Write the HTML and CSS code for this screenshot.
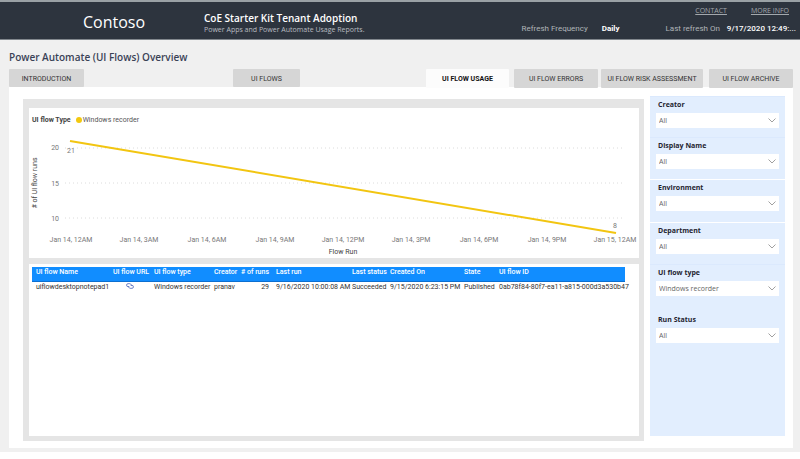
FILE: index.html
```html
<!DOCTYPE html>
<html lang="en">
<head>
<meta charset="utf-8">
<title>CoE Starter Kit Tenant Adoption</title>
<link rel="stylesheet" href="styles.css">
</head>
<body>
<div class="report">
  <header class="topbar">
    <div class="brand">Contoso</div>
    <div class="heading">
      <h1>CoE Starter Kit Tenant Adoption</h1>
      <p>Power Apps and Power Automate Usage Reports.</p>
    </div>
    <div class="meta">
      <nav class="links"><a href="#contact">CONTACT</a><a href="#info">MORE INFO</a></nav>
      <dl class="refresh">
        <dt>Refresh Frequency</dt><dd class="freq">Daily</dd>
        <dt>Last refresh On</dt><dd>9/17/2020 12:49:...</dd>
      </dl>
    </div>
  </header>

  <main>
    <h2>Power Automate (UI Flows) Overview</h2>
    <nav class="tabs">
      <button type="button" class="tab intro">INTRODUCTION</button>
      <button type="button" class="tab flows">UI FLOWS</button>
      <button type="button" class="tab usage" aria-current="page">UI FLOW USAGE</button>
      <button type="button" class="tab errors">UI FLOW ERRORS</button>
      <button type="button" class="tab risk">UI FLOW RISK ASSESSMENT</button>
      <button type="button" class="tab archive">UI FLOW ARCHIVE</button>
    </nav>

    <div class="page">
      <div class="visuals">
        <section class="card">
          <div class="legend"><b>UI flow Type</b><span class="dot"></span>Windows recorder</div>
          <svg class="chart" viewBox="0 0 610 132" role="img" aria-label="Number of UI flow runs by flow run">
            <g class="grid">
              <path d="M36 23H593M36 58H593M36 93H593"/>
            </g>
            <g class="axis">
              <text x="30" y="25" text-anchor="end">20</text>
              <text x="30" y="61" text-anchor="end">15</text>
              <text x="30" y="96" text-anchor="end">10</text>
            </g>
            <g class="axis" text-anchor="middle">
              <text x="42" y="117">Jan 14, 12AM</text>
              <text x="110" y="117">Jan 14, 3AM</text>
              <text x="178" y="117">Jan 14, 6AM</text>
              <text x="246" y="117">Jan 14, 9AM</text>
              <text x="314" y="117">Jan 14, 12PM</text>
              <text x="382" y="117">Jan 14, 3PM</text>
              <text x="450" y="117">Jan 14, 6PM</text>
              <text x="518" y="117">Jan 14, 9PM</text>
              <text x="586" y="117">Jan 15, 12AM</text>
              <text x="42" y="28">21</text>
              <text x="586" y="103">8</text>
            </g>
            <g class="title" text-anchor="middle">
              <text x="314" y="129">Flow Run</text>
              <text transform="translate(8 58) rotate(-90)"># of UI flow runs</text>
            </g>
            <path class="series" d="M41 16L587 108"/>
          </svg>
        </section>

        <section class="card runs">
          <table>
            <colgroup>
              <col class="c-name"><col class="c-url"><col class="c-type"><col class="c-creator"><col class="c-runs"><col class="c-last"><col class="c-status"><col class="c-created"><col class="c-state"><col class="c-id">
            </colgroup>
            <thead>
              <tr><th>UI flow Name</th><th>UI flow URL</th><th>UI flow type</th><th>Creator</th><th class="num"># of runs</th><th>Last run</th><th>Last status</th><th>Created On</th><th>State</th><th>UI flow ID</th></tr>
            </thead>
            <tbody>
              <tr>
                <td>uiflowdesktopnotepad1</td>
                <td class="url"><a href="#flow" aria-label="Open flow"><svg viewBox="0 0 8 6"><path d="M3 3.6H2a1.4 1.4 0 0 1 0-2.9h1.8a1.4 1.4 0 0 1 1.2 2.1M5 2.4h1a1.4 1.4 0 0 1 0 2.9H4.2A1.4 1.4 0 0 1 3 3.2"/></svg></a></td>
                <td>Windows recorder</td><td>pranav</td><td class="num">29</td><td>9/16/2020 10:00:08 AM</td><td>Succeeded</td><td>9/15/2020 6:23:15 PM</td><td>Published</td><td>0ab78f84-80f7-ea11-a815-000d3a530b47</td>
              </tr>
            </tbody>
          </table>
        </section>
      </div>

      <aside class="filters">
        <div class="filter"><label for="creator">Creator</label><div class="pick"><select id="creator"><option>All</option></select><svg viewBox="0 0 8 5"><path d="M.5 .5L4 4L7.5 .5"/></svg></div></div>
        <div class="filter"><label for="display">Display Name</label><div class="pick"><select id="display"><option>All</option></select><svg viewBox="0 0 8 5"><path d="M.5 .5L4 4L7.5 .5"/></svg></div></div>
        <div class="filter ruled env"><label for="environment">Environment</label><div class="pick"><select id="environment"><option>All</option></select><svg viewBox="0 0 8 5"><path d="M.5 .5L4 4L7.5 .5"/></svg></div></div>
        <div class="filter ruled"><label for="department">Department</label><div class="pick"><select id="department"><option>All</option></select><svg viewBox="0 0 8 5"><path d="M.5 .5L4 4L7.5 .5"/></svg></div></div>
        <div class="filter tall"><label for="type">UI flow type</label><div class="pick"><select id="type"><option>Windows recorder</option></select><svg viewBox="0 0 8 5"><path d="M.5 .5L4 4L7.5 .5"/></svg></div></div>
        <div class="filter last"><label for="status">Run Status</label><div class="pick"><select id="status"><option>All</option></select><svg viewBox="0 0 8 5"><path d="M.5 .5L4 4L7.5 .5"/></svg></div></div>
      </aside>
    </div>
  </main>
</div>
</body>
</html>
```
FILE: styles.css
```css
* { box-sizing: border-box; }
body {
  margin: 0;
  background: #fff;
  color: #333;
  font: 7px/10px "Open Sans", "Noto Sans", sans-serif;
}
h1, h2, p, dl, dd { margin: 0; }
button, select { font: inherit; color: inherit; border: 0; border-radius: 0; padding: 0; }

.report {
  background: #f0f0f0;
  padding-bottom: 4px;
  box-shadow: 0 2px 6px #e4e4e4;
}

.topbar {
  display: flex;
  height: 40px;
  border-top: 2px solid #9aa1a5;
  border-bottom: 1px solid #81878d;
  background: #2d343e;
  color: #fff;
}
.brand {
  width: 204px;
  padding: 8px 0 0 83px;
  font-size: 16px;
  line-height: 24px;
}
.heading { padding-top: 9px; }
.heading h1 { font-size: 10px; line-height: 14px; font-weight: 600; white-space: nowrap; }
.heading p { font-size: 7px; line-height: 10px; color: #b9bcc0; white-space: nowrap; }
.meta { margin-left: auto; padding: 3px 4px 0 0; font-size: 8px; line-height: 12px; }
.links { display: flex; justify-content: flex-end; gap: 24px; padding-right: 7px; font-size: 7px; }
.links a { color: #a3a8ad; }
.refresh { display: flex; margin-top: 6px; white-space: nowrap; font-family: Roboto, "Open Sans", sans-serif; }
.refresh dt { color: #b0b4b8; }
.refresh dd { margin-left: 7px; font-weight: 500; }
.refresh .freq { margin: 0 46px 0 14px; font-weight: 700; }

main { padding: 0 7px 0 9px; }
h2 { padding-top: 10px; font-size: 10px; line-height: 14px; color: #3a4256; font-weight: 600; }

.tabs {
  display: grid;
  grid-template-columns: 75fr 149fr 67fr 126fr 83fr 5fr 84fr 3fr 102fr 6fr 84fr;
  margin-top: 5px;
  height: 18px;
}
.tab { background: #d6d6d6; white-space: nowrap; height: 19px; border-radius: 1px; z-index: 1; font-family: Roboto, "Open Sans", sans-serif; }
.intro, .flows { height: 18px; padding-top: 2px; }
.intro { grid-column: 1; }
.flows { grid-column: 3; }
.usage { grid-column: 5; background: #fcfcfc; color: #111; font-weight: 700; }
.errors { grid-column: 7; }
.risk { grid-column: 9; }
.archive { grid-column: 11; }

.page {
  display: flex;
  align-items: flex-start;
  gap: 6px;
  min-height: 361px;
  padding: 9px 8px 7px 14px;
  background: #fff;
}
.visuals {
  flex: 1;
  min-width: 0;
  margin-top: 3px;
  padding: 9px 5px 5px 6px;
  background: #e5e5e5;
  display: grid;
  gap: 6px;
  font-family: Roboto, "Open Sans", sans-serif;
}
.card { background: #fff; }
.legend { display: flex; align-items: center; padding: 7px 0 0 3px; color: #555; }
.legend b { font-weight: 700; color: #444; }
.dot { width: 6px; height: 6px; margin: 0 1px 0 5px; border-radius: 50%; background: #f2c80f; }
.chart { display: block; width: 100%; margin-bottom: 1px; font-size: 7px; }
.grid path { stroke: #dcdcdc; stroke-dasharray: 1 3; fill: none; }
.axis { fill: #777; }
.title { fill: #444; }
.series { stroke: #f2c511; stroke-width: 2; fill: none; }

.runs { min-height: 172px; padding: 3px 14px 0 3px; }
table { width: 100%; table-layout: fixed; border-collapse: collapse; white-space: nowrap; }
.c-name { width: 77px; }
.c-url { width: 41px; }
.c-type { width: 60px; }
.c-creator { width: 28px; }
.c-runs { width: 34px; }
.c-last { width: 76px; }
.c-status { width: 38px; }
.c-created { width: 74px; }
.c-state { width: 35px; }
th, td { padding: 0 3px 0 4px; text-align: left; }
th {
  height: 14px;
  padding-bottom: 3px;
  background: #118dff;
  color: #fff;
  font-weight: 500;
  border-bottom: 1px solid #0c6fd0;
}
td { height: 12px; }
.num { padding-left: 0; text-align: right; }
.url { text-align: center; }
.url svg { width: 8px; height: 6px; fill: none; stroke: #4a63b8; stroke-width: .8; }

.filters {
  width: 17%;
  min-width: 135px;
  max-width: 135px;
  min-height: 340px;
  background: #e2eefe;
}
.filter { height: 42px; padding: 3px 6px 0; border-top: 1px solid #dbe9fd; }
.filter:first-child { height: 41px; }
.ruled { border-top-color: #fff; }
.env { height: 43px; }
.tall { height: 47px; }
.last { border-top-color: #e2eefe; }
.filter label { display: block; padding-left: 2px; font-weight: 700; color: #1f2430; }
.pick {
  display: flex;
  align-items: center;
  height: 15px;
  margin-top: 3px;
  padding: 0 3px;
  background: #fff;
  color: #666;
}
.pick select { flex: 1; min-width: 0; appearance: none; background: none; }
.pick svg { width: 8px; height: 5px; fill: none; stroke: #888; stroke-width: .8; }
```
